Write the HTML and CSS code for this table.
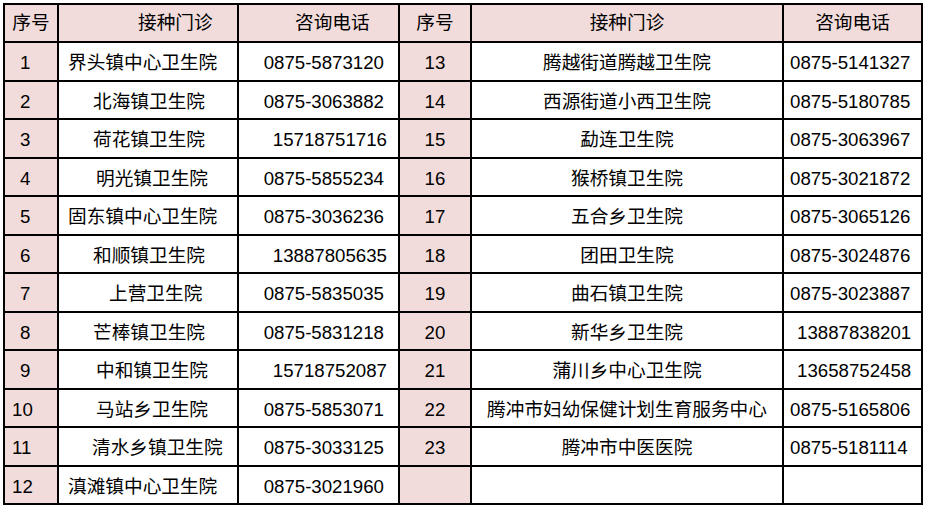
FILE: index.html
```html
<!DOCTYPE html>
<html lang="zh-CN">
<head>
<meta charset="utf-8">
<title>接种门诊咨询电话</title>
<link rel="stylesheet" href="styles.css">
</head>
<body>
<table class="sheet">
  <colgroup>
    <col class="c-no"><col class="c-name"><col class="c-tel">
    <col class="c-no2"><col class="c-name2"><col class="c-tel2">
  </colgroup>
  <tr class="head">
    <td class="pk ctr">序号</td>
    <td class="pk h-name">接种门诊</td>
    <td class="pk h-tel">咨询电话</td>
    <td class="pk ctr">序号</td>
    <td class="pk ctr">接种门诊</td>
    <td class="pk ctr">咨询电话</td>
  </tr>
  <tr>
    <td class="pk no d1">1</td><td class="nm a">界头镇中心卫生院</td><td class="tl">0875-5873120</td>
    <td class="pk ctr">13</td><td class="ctr">腾越街道腾越卫生院</td><td class="tr">0875-5141327</td>
  </tr>
  <tr>
    <td class="pk no d1">2</td><td class="nm b">北海镇卫生院</td><td class="tl">0875-3063882</td>
    <td class="pk ctr">14</td><td class="ctr">西源街道小西卫生院</td><td class="tr">0875-5180785</td>
  </tr>
  <tr>
    <td class="pk no d1">3</td><td class="nm b">荷花镇卫生院</td><td class="tl mob">15718751716</td>
    <td class="pk ctr">15</td><td class="ctr">勐连卫生院</td><td class="tr">0875-3063967</td>
  </tr>
  <tr>
    <td class="pk no d1">4</td><td class="nm c">明光镇卫生院</td><td class="tl">0875-5855234</td>
    <td class="pk ctr">16</td><td class="ctr">猴桥镇卫生院</td><td class="tr">0875-3021872</td>
  </tr>
  <tr>
    <td class="pk no d1">5</td><td class="nm a">固东镇中心卫生院</td><td class="tl">0875-3036236</td>
    <td class="pk ctr">17</td><td class="ctr">五合乡卫生院</td><td class="tr">0875-3065126</td>
  </tr>
  <tr>
    <td class="pk no d1">6</td><td class="nm b">和顺镇卫生院</td><td class="tl mob">13887805635</td>
    <td class="pk ctr">18</td><td class="ctr">团田卫生院</td><td class="tr">0875-3024876</td>
  </tr>
  <tr>
    <td class="pk no d1">7</td><td class="nm d">上营卫生院</td><td class="tl">0875-5835035</td>
    <td class="pk ctr">19</td><td class="ctr">曲石镇卫生院</td><td class="tr">0875-3023887</td>
  </tr>
  <tr>
    <td class="pk no d1">8</td><td class="nm b">芒棒镇卫生院</td><td class="tl">0875-5831218</td>
    <td class="pk ctr">20</td><td class="ctr">新华乡卫生院</td><td class="tr mob">13887838201</td>
  </tr>
  <tr>
    <td class="pk no d1">9</td><td class="nm c">中和镇卫生院</td><td class="tl mob">15718752087</td>
    <td class="pk ctr">21</td><td class="ctr">蒲川乡中心卫生院</td><td class="tr mob">13658752458</td>
  </tr>
  <tr>
    <td class="pk no">10</td><td class="nm c">马站乡卫生院</td><td class="tl">0875-5853071</td>
    <td class="pk ctr">22</td><td class="ctr">腾冲市妇幼保健计划生育服务中心</td><td class="tr">0875-5165806</td>
  </tr>
  <tr>
    <td class="pk no">11</td><td class="nm e">清水乡镇卫生院</td><td class="tl">0875-3033125</td>
    <td class="pk ctr">23</td><td class="ctr">腾冲市中医医院</td><td class="tr">0875-5181114</td>
  </tr>
  <tr>
    <td class="pk no">12</td><td class="nm a">滇滩镇中心卫生院</td><td class="tl">0875-3021960</td>
    <td class="pk ctr"></td><td></td><td></td>
  </tr>
</table>
</body>
</html>
```

FILE: styles.css
```css
html, body {
  margin: 0;
  padding: 0;
  background: #ffffff;
}

.sheet {
  margin: 3px 0 0 3px;
  border-collapse: collapse;
  table-layout: fixed;
  width: 920px;
  font-family: "Liberation Sans", "Noto Sans CJK SC", sans-serif;
  font-size: 18.67px;
  color: #000;
}

.c-no { width: 54px; }
.c-name { width: 180px; }
.c-tel { width: 161px; }
.c-no2 { width: 72px; }
.c-name2 { width: 312px; }
.c-tel2 { width: 139px; }

.sheet td {
  border: 2px solid #000;
  padding: 0;
  vertical-align: middle;
  white-space: nowrap;
  overflow: hidden;
  line-height: 22px;
}

.sheet tr:not(.head) td { padding-top: 3px; }

.sheet tr { height: 39px; }
.sheet tr:nth-child(odd) { height: 38px; }
.sheet tr.head { height: 38px; }

.pk { background: #f2dcdb; }

.ctr { text-align: center; }

.no { text-align: left; padding-left: 7px !important; }
.no.d1 { padding-left: 15px !important; }

.h-name { text-align: left; padding-left: 79px !important; }
.h-tel { text-align: left; padding-left: 56px !important; }

.nm { text-align: left; }
.nm.a { padding-left: 9px !important; }
.nm.b { padding-left: 34px !important; }
.nm.c { padding-left: 37px !important; }
.nm.d { padding-left: 50px !important; }
.nm.e { padding-left: 33px !important; }

.tl { text-align: right; padding-right: 14px !important; }
.tl.mob { padding-right: 11px !important; }

.tr { text-align: left; padding-left: 6px !important; }
.tr.mob { padding-left: 13px !important; }
```
